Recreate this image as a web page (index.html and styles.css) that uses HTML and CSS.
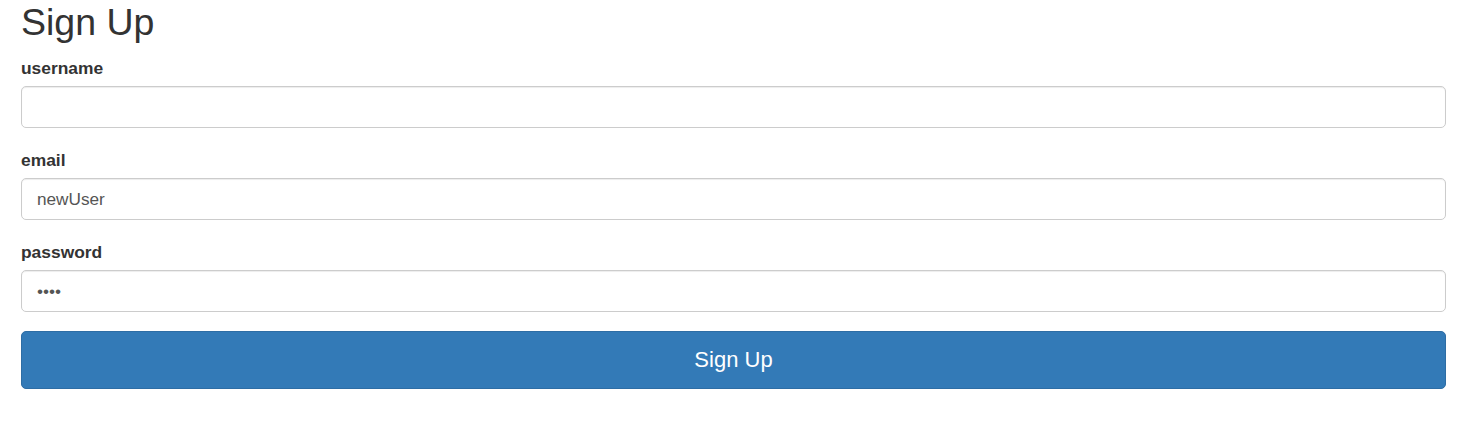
FILE: index.html
```html
<!DOCTYPE html>
<html>
<head>
<meta charset="utf-8">
<link rel="stylesheet" href="styles.css">
</head>
<body>
<div class="page">
  <h1 class="title">Sign Up</h1>
  <form class="form">
    <div class="group">
      <label class="label">username</label>
      <input class="input" type="text" value="">
    </div>
    <div class="group">
      <label class="label">email</label>
      <input class="input" type="text" value="newUser">
    </div>
    <div class="group">
      <label class="label">password</label>
      <input class="input" type="password" value="abcd">
    </div>
    <button class="btn" type="button">Sign Up</button>
  </form>
</div>
</body>
</html>
```
FILE: styles.css
```css
html, body { margin: 0; padding: 0; background: #fff; }
body { font-family: "Liberation Sans", Arial, sans-serif; color: #333; }
.page { padding: 0 23px 0 21px; }
.title { margin: 2px 0 14px; font-size: 37.5px; line-height: 40px; font-weight: 500; color: #333; }
.form { display: flex; flex-direction: column; }
.group { display: flex; flex-direction: column; margin-bottom: 20px; }
.label { font-size: 17.4px; line-height: 24px; font-weight: bold; margin-bottom: 6px; color: #333; }
.input { box-sizing: border-box; height: 42px; width: 100%; padding: 0 15px; border: 1px solid #ccc; border-radius: 5px; font-family: "Liberation Sans", Arial, sans-serif; font-size: 17.2px; color: #555; box-shadow: inset 0 1px 1px rgba(0,0,0,.075); outline: none; background: #fff; }
.btn { box-sizing: border-box; height: 58px; width: 100%; margin-top: -1px; background: #337ab7; border: 1px solid #2e6da4; border-radius: 5px; color: #fff; font-family: "Liberation Sans", Arial, sans-serif; font-size: 22px; line-height: 1; cursor: pointer; padding: 0; }
```
